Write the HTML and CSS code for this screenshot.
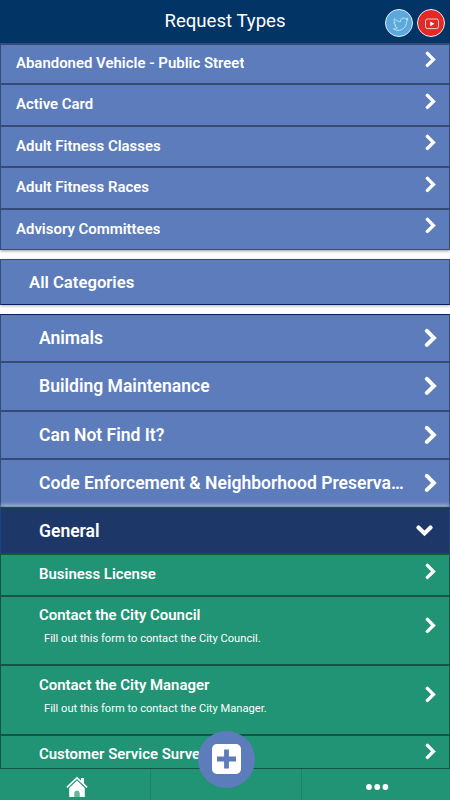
FILE: index.html
```html
<!DOCTYPE html>
<html lang="en">
<head>
    <meta charset="UTF-8">
    <meta name="viewport" content="width=device-width, initial-scale=1.0">
    <title>Request Types</title>
    <link rel="stylesheet" href="styles.css">
</head>
<body>
    <svg class="defs">
        <symbol id="chevron" viewBox="0 0 11 17">
            <path d="M2.4 2.4 L8.4 8.4 L2.4 14.4" fill="none" stroke="#fff" stroke-width="3.4" stroke-linecap="round" />
        </symbol>
    </svg>

    <div class="app">
        <header class="header">
            <h1>Request Types</h1>
            <div class="social">
                <a class="social-link twitter">
                    <svg width="17" height="15" viewBox="0 0 18 16"><path d="M1.5 12.6 C3.2 12.8 4.7 12.3 5.7 11.4 C4.3 11.1 3.4 10.3 3.1 9.2 L4.3 9 C2.8 8.3 2 7.2 2 5.8 L3.3 6.1 C2.1 4.8 1.9 3.2 2.6 1.7 C4.3 3.7 6.4 4.9 9 5.1 C8.7 2.8 10.1 1.1 12 1.1 C13 1.1 13.8 1.5 14.3 2.1 L16.4 1.3 L15.5 3 L17 2.7 L15.6 4.6 C15.6 10.6 11.2 14.2 6.4 14.2 C4.6 14.2 2.9 13.7 1.5 12.6 Z" /></svg>
                </a>
                <a class="social-link youtube">
                    <svg width="16" height="14" viewBox="0 0 16 14"><rect x="1.5" y="2" width="13" height="9.6" rx="2" /><path class="play" d="M6.2 4.4 L10.4 6.8 L6.2 9.2 Z" /></svg>
                </a>
            </div>
        </header>

        <main class="content">
            <ul class="list requests">
                <li class="row"><span class="label">Abandoned Vehicle - Public Street</span><svg class="arrow"><use href="#chevron" /></svg></li>
                <li class="row"><span class="label">Active Card</span><svg class="arrow"><use href="#chevron" /></svg></li>
                <li class="row"><span class="label">Adult Fitness Classes</span><svg class="arrow"><use href="#chevron" /></svg></li>
                <li class="row"><span class="label">Adult Fitness Races</span><svg class="arrow"><use href="#chevron" /></svg></li>
                <li class="row"><span class="label">Advisory Committees</span><svg class="arrow"><use href="#chevron" /></svg></li>
            </ul>

            <h2 class="all-categories">All Categories</h2>

            <ul class="list categories">
                <li class="row"><span class="label">Animals</span><svg class="arrow"><use href="#chevron" /></svg></li>
                <li class="row"><span class="label">Building Maintenance</span><svg class="arrow"><use href="#chevron" /></svg></li>
                <li class="row"><span class="label">Can Not Find It?</span><svg class="arrow"><use href="#chevron" /></svg></li>
                <li class="row"><span class="label">Code Enforcement &amp; Neighborhood Preserva…</span><svg class="arrow"><use href="#chevron" /></svg></li>
                <li class="row open"><span class="label">General</span><svg class="arrow-down" viewBox="0 0 17 12"><path d="M2.5 2.6 L8.5 8.4 L14.5 2.6" /></svg></li>
            </ul>

            <ul class="list items">
                <li class="row"><span class="label">Business License</span><svg class="arrow"><use href="#chevron" /></svg></li>
                <li class="row tall">
                    <div class="label">Contact the City Council<p>Fill out this form to contact the City Council.</p></div>
                    <svg class="arrow"><use href="#chevron" /></svg>
                </li>
                <li class="row tall">
                    <div class="label">Contact the City Manager<p>Fill out this form to contact the City Manager.</p></div>
                    <svg class="arrow"><use href="#chevron" /></svg>
                </li>
                <li class="row"><span class="label">Customer Service Survey</span><svg class="arrow"><use href="#chevron" /></svg></li>
            </ul>
        </main>

        <nav class="tabs">
            <a class="tab">
                <svg width="22" height="22" viewBox="0 0 22 22"><path d="M3.2 12 L11 4.6 L18.8 12 V21 H13.4 V17 Q13.4 14.8 11 14.8 Q8.6 14.8 8.6 17 V21 H3.2 Z" /><path d="M15 2 H18 V8 L15 5.2 Z" /><path class="roof" d="M0.9 11.4 L11 1.8 L21.1 11.4" /><path class="door" d="M8.6 21 V17 Q8.6 14.8 11 14.8 Q13.4 14.8 13.4 17 V21 Z" /></svg>
            </a>
            <a class="tab"></a>
            <a class="tab">
                <svg width="24" height="8" viewBox="0 0 24 8"><circle cx="4" cy="4" r="2.9" /><circle cx="12.2" cy="4" r="2.9" /><circle cx="20.4" cy="4" r="2.9" /></svg>
            </a>
        </nav>

        <button class="add" aria-label="New request">
            <svg width="29" height="30" viewBox="0 0 29 30"><rect width="29" height="30" rx="5" fill="#fff" /><path d="M14.5 5.5 V24.5 M5 15 H24" stroke="#5d7cbb" stroke-width="4.8" /></svg>
        </button>
    </div>
</body>
</html>
```
FILE: styles.css
```css
* {
    margin: 0;
    padding: 0;
    box-sizing: border-box;
}

body {
    background: #fff;
    color: #fff;
    font-family: Roboto, sans-serif;
}

ul {
    list-style: none;
}

.defs {
    display: none;
}

.app {
    position: relative;
    display: flex;
    flex-direction: column;
    height: 800px;
    overflow: hidden;
}

/* Header */
.header {
    display: grid;
    grid-template-columns: 1fr auto 1fr;
    flex-shrink: 0;
    height: 42.5px;
    background: #023466;
}

.header h1 {
    grid-column: 2;
    font-size: 18.6px;
    font-weight: 400;
    line-height: 43px;
}

.social {
    display: flex;
    justify-content: flex-end;
    gap: 4px;
    padding: 9px 5px 0 0;
}

.social-link {
    display: flex;
    align-items: center;
    justify-content: center;
    width: 28px;
    height: 28px;
    border: 1px solid #e4ecf6;
    border-radius: 50%;
}

.social-link svg {
    fill: none;
    stroke: #d5e9f7;
    stroke-width: 0.9;
}

.twitter {
    background: #5aa8dc;
}

.twitter svg {
    margin: 3px 0 0 3px;
}

.youtube {
    background: #e52823;
}

.youtube svg {
    margin: 2px 0 0 2px;
}

.youtube .play {
    fill: #fff;
    stroke: none;
}

/* Lists */
.content {
    flex: 1;
    min-height: 0;
    overflow: hidden;
}

.row {
    display: flex;
    justify-content: space-between;
    align-items: flex-start;
    height: 41.5px;
    padding: 8px 13px 0 15px;
    background: #5d7cbb;
    border: 1px solid #364b78;
    font-size: 14.95px;
    font-weight: 600;
    line-height: 22px;
}

.label {
    overflow: hidden;
    white-space: nowrap;
    text-overflow: ellipsis;
}

.arrow {
    flex-shrink: 0;
    width: 11px;
    height: 17px;
}

.requests {
    box-shadow: 0 1px 3px rgba(0, 0, 0, 0.4);
}

.requests .row:first-child {
    border-top-width: 2px;
    padding-top: 7px;
}

.requests .arrow {
    margin-top: -0.5px;
}

.all-categories {
    height: 46px;
    margin: 9px 0;
    padding-left: 28px;
    background: #5d7cbb;
    border: 1px solid #364b78;
    border-bottom-color: #06215f;
    box-shadow: 0 1px 3px rgba(0, 0, 0, 0.3);
    font-size: 16.7px;
    font-weight: 600;
    line-height: 45px;
}

.categories .row {
    align-items: center;
    height: 48.3px;
    padding: 0 12px 0 38px;
    font-size: 17.55px;
    line-height: 24px;
}

.categories .label {
    width: 366px;
}

.categories .arrow {
    width: 13px;
    height: 20px;
}

.categories .row:first-child {
    border-top-color: #06215f;
}

.categories .open {
    position: relative;
    height: 47.3px;
    padding-right: 16px;
    background: #1d3769;
    border-color: #1b4487;
    box-shadow: 0 -1px 5px rgba(255, 255, 255, 0.7);
}

.arrow-down {
    width: 17px;
    height: 12px;
    fill: none;
    stroke: #fff;
    stroke-width: 4.2;
    stroke-linecap: round;
}

/* Sits above the glow of the open category */
.items {
    position: relative;
}

.items .row {
    padding-top: 7.5px;
    padding-left: 38px;
    background: #209474;
    border-color: #145443;
}

.items .tall {
    height: 69.3px;
}

.tall .arrow {
    margin-top: 12.5px;
}

.tall p {
    padding-left: 5px;
    font-size: 11.15px;
    font-weight: 400;
    line-height: 25px;
}

/* Bottom bar */
.tabs {
    display: grid;
    grid-template-columns: 151px 151px 1fr;
    flex-shrink: 0;
    height: 32px;
    background: #209474;
    border-top: 1px solid #145443;
}

.tab {
    display: flex;
    align-items: center;
    justify-content: center;
    padding-top: 5px;
    border-right: 1px solid #1b8266;
}

.tab:first-child {
    padding-left: 3px;
}

.tab:last-child {
    padding-top: 4px;
    padding-left: 1px;
    border-right: none;
}

.tab svg {
    fill: #fff;
}

.tab .roof {
    fill: none;
    stroke: #fff;
    stroke-width: 1.6;
}

.tab .door {
    fill: #68b59e;
}

.add {
    position: absolute;
    left: 198px;
    bottom: 12px;
    display: flex;
    align-items: center;
    justify-content: center;
    width: 57px;
    height: 57px;
    padding-bottom: 2px;
    background: #5d7cbb;
    border: none;
    border-radius: 50%;
}
```
